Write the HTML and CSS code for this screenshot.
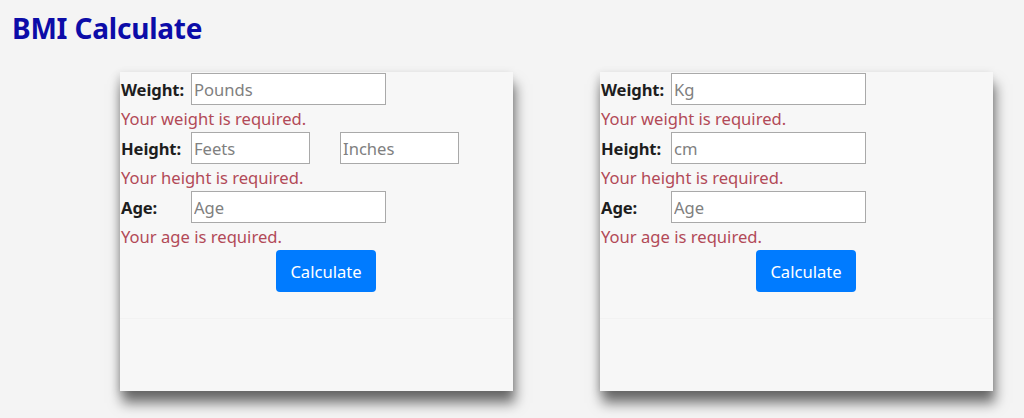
FILE: index.html
```html
<!DOCTYPE html>
<html>
<head>
<meta charset="utf-8">
<link rel="stylesheet" href="styles.css">
</head>
<body>
<h1 class="title">BMI Calculate</h1>
<div class="cards">
  <div class="card">
    <div class="card-body">
      <div class="row"><label class="lbl">Weight:</label><input class="inp" placeholder="Pounds"></div>
      <div class="err">Your weight is required.</div>
      <div class="row"><label class="lbl">Height:</label><input class="inp small" placeholder="Feets"><input class="inp small second" placeholder="Inches"></div>
      <div class="err">Your height is required.</div>
      <div class="row"><label class="lbl">Age:</label><input class="inp" placeholder="Age"></div>
      <div class="err">Your age is required.</div>
      <button class="btn">Calculate</button>
    </div>
    <div class="card-foot"></div>
  </div>
  <div class="card">
    <div class="card-body">
      <div class="row"><label class="lbl">Weight:</label><input class="inp" placeholder="Kg"></div>
      <div class="err">Your weight is required.</div>
      <div class="row"><label class="lbl">Height:</label><input class="inp" placeholder="cm"></div>
      <div class="err">Your height is required.</div>
      <div class="row"><label class="lbl">Age:</label><input class="inp" placeholder="Age"></div>
      <div class="err">Your age is required.</div>
      <button class="btn">Calculate</button>
    </div>
    <div class="card-foot"></div>
  </div>
</div>
</body>
</html>
```
FILE: styles.css
```css
html, body { margin: 0; padding: 0; }
body {
  background: #f4f4f4;
  font-family: "Noto Sans", "Open Sans", sans-serif;
  color: #212529;
  width: 1024px;
  height: 418px;
  overflow: hidden;
}
.title {
  margin: 0;
  padding: 10px 0 0 12px;
  font-size: 28px;
  line-height: 36px;
  font-weight: 700;
  color: #0c0ca8;
  letter-spacing: -0.2px;
}
.cards {
  display: flex;
  gap: 87px;
  padding: 26px 0 0 120px;
}
.card {
  width: 393px;
  height: 319px;
  background: #f7f7f7;
  box-shadow: 2px 12px 12px rgba(0,0,0,0.55), -2px 2px 8px rgba(0,0,0,0.12);
  display: flex;
  flex-direction: column;
}
.card-body {
  padding: 1px 0 0 1px;
  height: 245px;
  display: flex;
  flex-direction: column;
}
.card-foot {
  flex: 1;
  border-top: 1px solid #f2f2f2;
}
.row {
  display: flex;
  align-items: center;
  height: 32px;
}
.lbl {
  width: 70px;
  font-weight: 700;
  font-size: 16.6px;
  color: #1e1e1e;
  letter-spacing: -0.1px;
}
.inp {
  width: 195px;
  height: 32px;
  box-sizing: border-box;
  border: 1px solid #a9a9a9;
  background: #fff;
  font-family: inherit;
  font-size: 16.6px;
  padding: 0 2px;
  margin: 0;
}
.inp::placeholder { color: #808080; }
.small { width: 119px; }
.second { margin-left: 30px; }
.err {
  color: #b24a57;
  font-size: 16.6px;
  height: 27px;
  line-height: 27px;
}
.btn {
  margin: 0 0 0 155px;
  width: 100px;
  height: 42px;
  background: #007bff;
  color: #fff;
  border: none;
  border-radius: 4px;
  font-family: inherit;
  font-size: 16.6px;
  align-self: flex-start;
}
```
